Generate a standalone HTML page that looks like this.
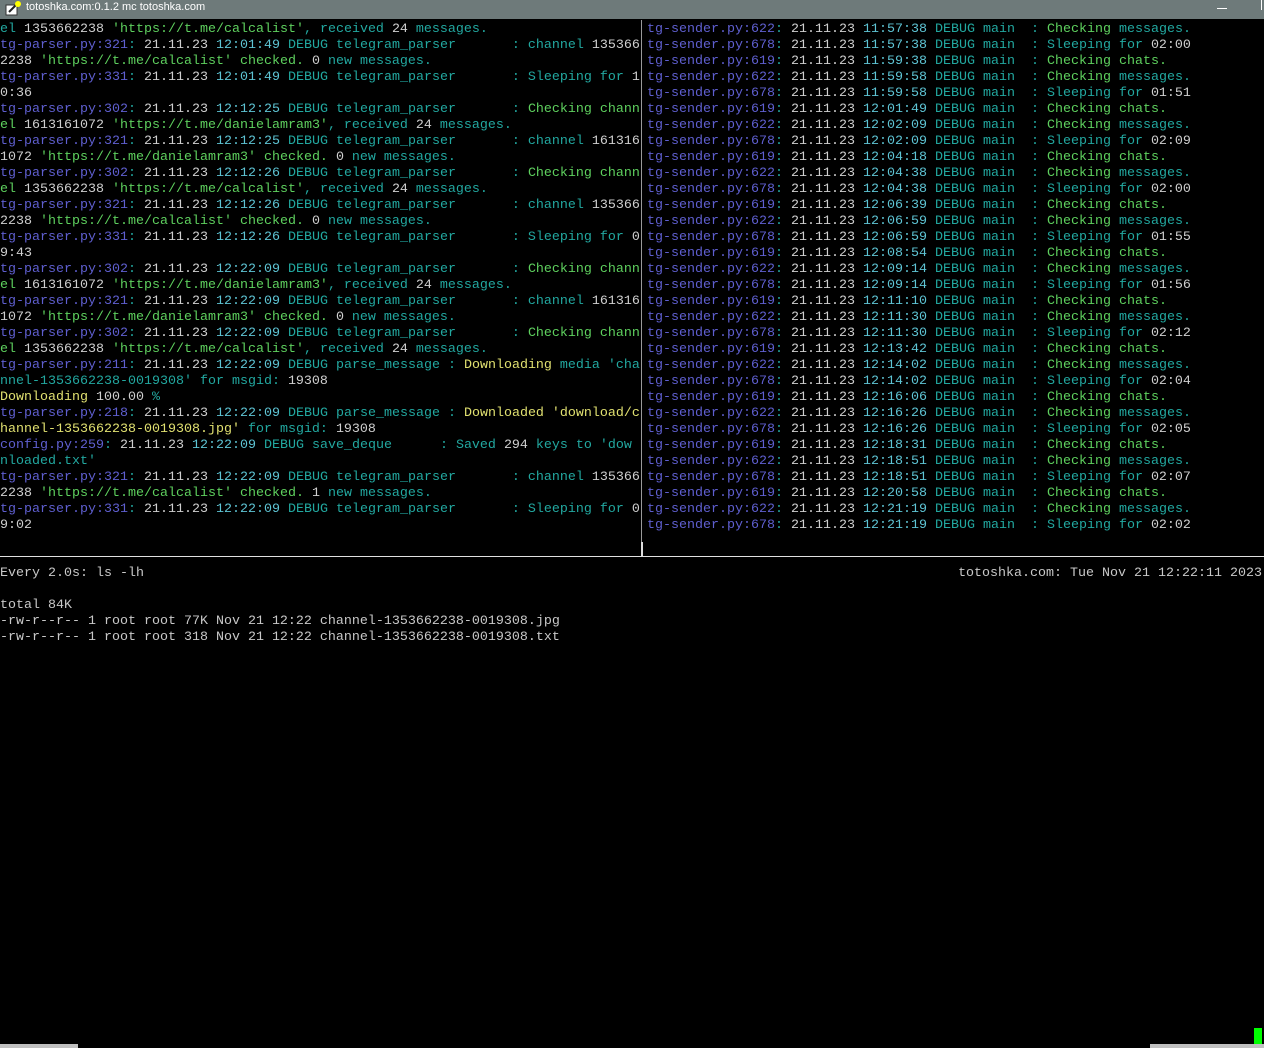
<!DOCTYPE html>
<html><head><meta charset="utf-8"><style>
html,body{margin:0;padding:0;background:#000;width:1264px;height:1048px;overflow:hidden;position:relative}
.tb{position:absolute;left:0;top:0;width:1264px;height:19px;background:#6e7a7a;color:#fff;font:11px "Liberation Sans",sans-serif;}
.tb span{position:absolute;left:26px;top:1px}
.pane{position:absolute;font-family:"Liberation Mono",monospace;font-size:13.33px;line-height:16px;white-space:normal;color:#c8c8c8}
.pane div{height:16px;white-space:pre}
.b{color:#5f5fd0}.w{color:#cfcfcf}.c{color:#5ec4d4}.t{color:#22a8a0}.g{color:#5ed05e}.y{color:#e0e070}
</style></head><body>
<div class="tb"><svg width="18" height="16" style="position:absolute;left:4px;top:1px"><rect x="2" y="4" width="11" height="10" fill="#fff" stroke="#333"/><path d="M5 11 L13 3" stroke="#222" stroke-width="2"/><circle cx="14" cy="3" r="3" fill="#ff0"/></svg><span>totoshka.com:0.1.2 mc totoshka.com</span>
<div style="position:absolute;left:1217px;top:8px;width:10px;height:1px;background:#fff"></div>
<div style="position:absolute;left:1261px;top:0;width:1px;height:10px;background:#fff"></div></div>

<div class="pane" style="left:0;top:22px"><div><span class="t">el </span><span class="w">1353662238</span> <span class="g">'https://t.me/calcalist'</span><span class="t">, received </span><span class="w">24</span><span class="t"> messages.</span></div><div><span class="b">tg-parser.py:321</span><span class="t">:</span> <span class="w">21.11.23</span> <span class="c">12:01:49</span> <span class="t">DEBUG telegram_parser       : channel </span><span class="w">135366</span></div><div><span class="w">2238</span> <span class="g">'https://t.me/calcalist' checked.</span> <span class="w">0</span><span class="t"> new messages.</span></div><div><span class="b">tg-parser.py:331</span><span class="t">:</span> <span class="w">21.11.23</span> <span class="c">12:01:49</span> <span class="t">DEBUG telegram_parser       : Sleeping for </span><span class="w">1</span></div><div><span class="w">0:36</span></div><div><span class="b">tg-parser.py:302</span><span class="t">:</span> <span class="w">21.11.23</span> <span class="c">12:12:25</span> <span class="t">DEBUG telegram_parser       : </span><span class="g">Checking chann</span></div><div><span class="g">el </span><span class="w">1613161072</span> <span class="g">'https://t.me/danielamram3'</span><span class="t">, received </span><span class="w">24</span><span class="t"> messages.</span></div><div><span class="b">tg-parser.py:321</span><span class="t">:</span> <span class="w">21.11.23</span> <span class="c">12:12:25</span> <span class="t">DEBUG telegram_parser       : channel </span><span class="w">161316</span></div><div><span class="w">1072</span> <span class="g">'https://t.me/danielamram3' checked.</span> <span class="w">0</span><span class="t"> new messages.</span></div><div><span class="b">tg-parser.py:302</span><span class="t">:</span> <span class="w">21.11.23</span> <span class="c">12:12:26</span> <span class="t">DEBUG telegram_parser       : </span><span class="g">Checking chann</span></div><div><span class="g">el </span><span class="w">1353662238</span> <span class="g">'https://t.me/calcalist'</span><span class="t">, received </span><span class="w">24</span><span class="t"> messages.</span></div><div><span class="b">tg-parser.py:321</span><span class="t">:</span> <span class="w">21.11.23</span> <span class="c">12:12:26</span> <span class="t">DEBUG telegram_parser       : channel </span><span class="w">135366</span></div><div><span class="w">2238</span> <span class="g">'https://t.me/calcalist' checked.</span> <span class="w">0</span><span class="t"> new messages.</span></div><div><span class="b">tg-parser.py:331</span><span class="t">:</span> <span class="w">21.11.23</span> <span class="c">12:12:26</span> <span class="t">DEBUG telegram_parser       : Sleeping for </span><span class="w">0</span></div><div><span class="w">9:43</span></div><div><span class="b">tg-parser.py:302</span><span class="t">:</span> <span class="w">21.11.23</span> <span class="c">12:22:09</span> <span class="t">DEBUG telegram_parser       : </span><span class="g">Checking chann</span></div><div><span class="g">el </span><span class="w">1613161072</span> <span class="g">'https://t.me/danielamram3'</span><span class="t">, received </span><span class="w">24</span><span class="t"> messages.</span></div><div><span class="b">tg-parser.py:321</span><span class="t">:</span> <span class="w">21.11.23</span> <span class="c">12:22:09</span> <span class="t">DEBUG telegram_parser       : channel </span><span class="w">161316</span></div><div><span class="w">1072</span> <span class="g">'https://t.me/danielamram3' checked.</span> <span class="w">0</span><span class="t"> new messages.</span></div><div><span class="b">tg-parser.py:302</span><span class="t">:</span> <span class="w">21.11.23</span> <span class="c">12:22:09</span> <span class="t">DEBUG telegram_parser       : </span><span class="g">Checking chann</span></div><div><span class="g">el </span><span class="w">1353662238</span> <span class="g">'https://t.me/calcalist'</span><span class="t">, received </span><span class="w">24</span><span class="t"> messages.</span></div><div><span class="b">tg-parser.py:211</span><span class="t">:</span> <span class="w">21.11.23</span> <span class="c">12:22:09</span> <span class="t">DEBUG parse_message : </span><span class="y">Downloading</span><span class="t"> media 'cha</span></div><div><span class="t">nnel-1353662238-0019308' for msgid: </span><span class="w">19308</span></div><div><span class="y">Downloading</span> <span class="w">100.00</span> <span class="t">%</span></div><div><span class="b">tg-parser.py:218</span><span class="t">:</span> <span class="w">21.11.23</span> <span class="c">12:22:09</span> <span class="t">DEBUG parse_message : </span><span class="y">Downloaded 'download/c</span></div><div><span class="y">hannel-1353662238-0019308.jpg'</span><span class="t"> for msgid: </span><span class="w">19308</span></div><div><span class="b">config.py:259</span><span class="t">:</span> <span class="w">21.11.23</span> <span class="c">12:22:09</span> <span class="t">DEBUG save_deque      : Saved </span><span class="w">294</span><span class="t"> keys to 'dow </span></div><div><span class="t">nloaded.txt'</span></div><div><span class="b">tg-parser.py:321</span><span class="t">:</span> <span class="w">21.11.23</span> <span class="c">12:22:09</span> <span class="t">DEBUG telegram_parser       : channel </span><span class="w">135366</span></div><div><span class="w">2238</span> <span class="g">'https://t.me/calcalist' checked.</span> <span class="w">1</span><span class="t"> new messages.</span></div><div><span class="b">tg-parser.py:331</span><span class="t">:</span> <span class="w">21.11.23</span> <span class="c">12:22:09</span> <span class="t">DEBUG telegram_parser       : Sleeping for </span><span class="w">0</span></div><div><span class="w">9:02</span></div></div>

<div style="position:absolute;left:641px;top:20px;width:1px;height:536px;background:#9a9a9a"></div>
<div style="position:absolute;left:641px;top:542px;width:2px;height:14px;background:#ddd"></div>
<div style="position:absolute;left:0;top:556px;width:1264px;height:1px;background:#e0e0e0"></div>

<div class="pane" style="left:647px;top:22px"><div><span class="b">tg-sender.py:622</span><span class="t">:</span> <span class="w">21.11.23</span> <span class="c">11:57:38</span> <span class="t">DEBUG main  : </span><span class="g">Checking</span><span class="t"> messages.</span></div><div><span class="b">tg-sender.py:678</span><span class="t">:</span> <span class="w">21.11.23</span> <span class="c">11:57:38</span> <span class="t">DEBUG main  : Sleeping for </span><span class="w">02:00</span></div><div><span class="b">tg-sender.py:619</span><span class="t">:</span> <span class="w">21.11.23</span> <span class="c">11:59:38</span> <span class="t">DEBUG main  : </span><span class="g">Checking chats.</span></div><div><span class="b">tg-sender.py:622</span><span class="t">:</span> <span class="w">21.11.23</span> <span class="c">11:59:58</span> <span class="t">DEBUG main  : </span><span class="g">Checking</span><span class="t"> messages.</span></div><div><span class="b">tg-sender.py:678</span><span class="t">:</span> <span class="w">21.11.23</span> <span class="c">11:59:58</span> <span class="t">DEBUG main  : Sleeping for </span><span class="w">01:51</span></div><div><span class="b">tg-sender.py:619</span><span class="t">:</span> <span class="w">21.11.23</span> <span class="c">12:01:49</span> <span class="t">DEBUG main  : </span><span class="g">Checking chats.</span></div><div><span class="b">tg-sender.py:622</span><span class="t">:</span> <span class="w">21.11.23</span> <span class="c">12:02:09</span> <span class="t">DEBUG main  : </span><span class="g">Checking</span><span class="t"> messages.</span></div><div><span class="b">tg-sender.py:678</span><span class="t">:</span> <span class="w">21.11.23</span> <span class="c">12:02:09</span> <span class="t">DEBUG main  : Sleeping for </span><span class="w">02:09</span></div><div><span class="b">tg-sender.py:619</span><span class="t">:</span> <span class="w">21.11.23</span> <span class="c">12:04:18</span> <span class="t">DEBUG main  : </span><span class="g">Checking chats.</span></div><div><span class="b">tg-sender.py:622</span><span class="t">:</span> <span class="w">21.11.23</span> <span class="c">12:04:38</span> <span class="t">DEBUG main  : </span><span class="g">Checking</span><span class="t"> messages.</span></div><div><span class="b">tg-sender.py:678</span><span class="t">:</span> <span class="w">21.11.23</span> <span class="c">12:04:38</span> <span class="t">DEBUG main  : Sleeping for </span><span class="w">02:00</span></div><div><span class="b">tg-sender.py:619</span><span class="t">:</span> <span class="w">21.11.23</span> <span class="c">12:06:39</span> <span class="t">DEBUG main  : </span><span class="g">Checking chats.</span></div><div><span class="b">tg-sender.py:622</span><span class="t">:</span> <span class="w">21.11.23</span> <span class="c">12:06:59</span> <span class="t">DEBUG main  : </span><span class="g">Checking</span><span class="t"> messages.</span></div><div><span class="b">tg-sender.py:678</span><span class="t">:</span> <span class="w">21.11.23</span> <span class="c">12:06:59</span> <span class="t">DEBUG main  : Sleeping for </span><span class="w">01:55</span></div><div><span class="b">tg-sender.py:619</span><span class="t">:</span> <span class="w">21.11.23</span> <span class="c">12:08:54</span> <span class="t">DEBUG main  : </span><span class="g">Checking chats.</span></div><div><span class="b">tg-sender.py:622</span><span class="t">:</span> <span class="w">21.11.23</span> <span class="c">12:09:14</span> <span class="t">DEBUG main  : </span><span class="g">Checking</span><span class="t"> messages.</span></div><div><span class="b">tg-sender.py:678</span><span class="t">:</span> <span class="w">21.11.23</span> <span class="c">12:09:14</span> <span class="t">DEBUG main  : Sleeping for </span><span class="w">01:56</span></div><div><span class="b">tg-sender.py:619</span><span class="t">:</span> <span class="w">21.11.23</span> <span class="c">12:11:10</span> <span class="t">DEBUG main  : </span><span class="g">Checking chats.</span></div><div><span class="b">tg-sender.py:622</span><span class="t">:</span> <span class="w">21.11.23</span> <span class="c">12:11:30</span> <span class="t">DEBUG main  : </span><span class="g">Checking</span><span class="t"> messages.</span></div><div><span class="b">tg-sender.py:678</span><span class="t">:</span> <span class="w">21.11.23</span> <span class="c">12:11:30</span> <span class="t">DEBUG main  : Sleeping for </span><span class="w">02:12</span></div><div><span class="b">tg-sender.py:619</span><span class="t">:</span> <span class="w">21.11.23</span> <span class="c">12:13:42</span> <span class="t">DEBUG main  : </span><span class="g">Checking chats.</span></div><div><span class="b">tg-sender.py:622</span><span class="t">:</span> <span class="w">21.11.23</span> <span class="c">12:14:02</span> <span class="t">DEBUG main  : </span><span class="g">Checking</span><span class="t"> messages.</span></div><div><span class="b">tg-sender.py:678</span><span class="t">:</span> <span class="w">21.11.23</span> <span class="c">12:14:02</span> <span class="t">DEBUG main  : Sleeping for </span><span class="w">02:04</span></div><div><span class="b">tg-sender.py:619</span><span class="t">:</span> <span class="w">21.11.23</span> <span class="c">12:16:06</span> <span class="t">DEBUG main  : </span><span class="g">Checking chats.</span></div><div><span class="b">tg-sender.py:622</span><span class="t">:</span> <span class="w">21.11.23</span> <span class="c">12:16:26</span> <span class="t">DEBUG main  : </span><span class="g">Checking</span><span class="t"> messages.</span></div><div><span class="b">tg-sender.py:678</span><span class="t">:</span> <span class="w">21.11.23</span> <span class="c">12:16:26</span> <span class="t">DEBUG main  : Sleeping for </span><span class="w">02:05</span></div><div><span class="b">tg-sender.py:619</span><span class="t">:</span> <span class="w">21.11.23</span> <span class="c">12:18:31</span> <span class="t">DEBUG main  : </span><span class="g">Checking chats.</span></div><div><span class="b">tg-sender.py:622</span><span class="t">:</span> <span class="w">21.11.23</span> <span class="c">12:18:51</span> <span class="t">DEBUG main  : </span><span class="g">Checking</span><span class="t"> messages.</span></div><div><span class="b">tg-sender.py:678</span><span class="t">:</span> <span class="w">21.11.23</span> <span class="c">12:18:51</span> <span class="t">DEBUG main  : Sleeping for </span><span class="w">02:07</span></div><div><span class="b">tg-sender.py:619</span><span class="t">:</span> <span class="w">21.11.23</span> <span class="c">12:20:58</span> <span class="t">DEBUG main  : </span><span class="g">Checking chats.</span></div><div><span class="b">tg-sender.py:622</span><span class="t">:</span> <span class="w">21.11.23</span> <span class="c">12:21:19</span> <span class="t">DEBUG main  : </span><span class="g">Checking</span><span class="t"> messages.</span></div><div><span class="b">tg-sender.py:678</span><span class="t">:</span> <span class="w">21.11.23</span> <span class="c">12:21:19</span> <span class="t">DEBUG main  : Sleeping for </span><span class="w">02:02</span></div></div>

<div class="pane" style="left:0;top:566px;color:#c8c8c8"><div>Every 2.0s: ls -lh</div><div></div><div>total 84K</div><div>-rw-r--r-- 1 root root 77K Nov 21 12:22 channel-1353662238-0019308.jpg</div><div>-rw-r--r-- 1 root root 318 Nov 21 12:22 channel-1353662238-0019308.txt</div></div>
<div class="pane" style="right:2px;top:566px;color:#c8c8c8"><div>totoshka.com: Tue Nov 21 12:22:11 2023</div></div>

<div style="position:absolute;left:1254px;top:1028px;width:8px;height:16px;background:#00ff00"></div>
<div style="position:absolute;left:0;top:1044px;width:78px;height:4px;background:#c0c0c0"></div>
<div style="position:absolute;left:1150px;top:1044px;width:114px;height:4px;background:#c0c0c0"></div>
</body></html>
